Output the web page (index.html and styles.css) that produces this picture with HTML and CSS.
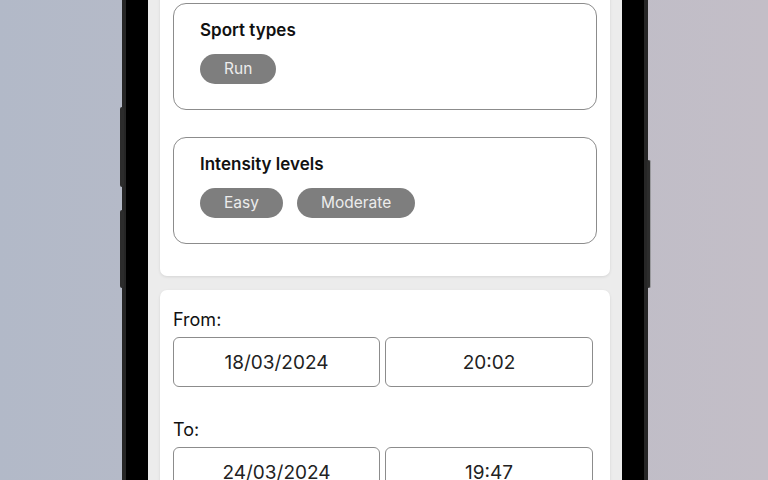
FILE: index.html
```html
<!DOCTYPE html>
<html lang="en">
<head>
<meta charset="utf-8">
<title>Filters</title>
<link rel="stylesheet" href="styles.css">
</head>
<body>
<div class="phone">
  <span class="btn btn-l1"></span>
  <span class="btn btn-l2"></span>
  <span class="btn btn-r1"></span>
  <div class="bezel">
    <div class="screen">
      <section class="card card-filters">
        <div class="group">
          <h2 class="group-title">Sport types</h2>
          <div class="chips">
            <span class="chip">Run</span>
          </div>
        </div>
        <div class="group">
          <h2 class="group-title">Intensity levels</h2>
          <div class="chips">
            <span class="chip">Easy</span>
            <span class="chip">Moderate</span>
          </div>
        </div>
      </section>
      <section class="card card-dates">
        <div class="field">
          <div class="label">From:</div>
          <div class="inputs">
            <div class="input">18/03/2024</div>
            <div class="input">20:02</div>
          </div>
        </div>
        <div class="field">
          <div class="label">To:</div>
          <div class="inputs">
            <div class="input">24/03/2024</div>
            <div class="input">19:47</div>
          </div>
        </div>
      </section>
    </div>
  </div>
</div>
</body>
</html>
```

FILE: styles.css
```css
* { box-sizing: border-box; }
html, body { margin: 0; padding: 0; }
body {
  width: 768px;
  height: 480px;
  overflow: hidden;
  background: linear-gradient(90deg, #b2b9c8 0%, #bbbcc8 50%, #c3bec7 100%);
  display: flex;
  justify-content: center;
  align-items: flex-start;
  padding-left: 2px;
  font-family: "Inter", "Roboto", "Liberation Sans", sans-serif;
}
.phone {
  position: relative;
  width: 526px;
  height: 680px;
  margin-top: -100px;
  flex: none;
  background: #262626;
  border-radius: 70px;
  padding: 4px;
}
.btn {
  position: absolute;
  width: 4px;
  background: #2c2c2c;
  border-radius: 2px;
}
.btn-l1 { left: -2px; top: 207px; height: 80px; }
.btn-l2 { left: -2px; top: 310px; height: 78px; }
.btn-r1 { right: -3px; top: 260px; height: 128px; border-right: 1px solid #9a9a9e; }
.bezel {
  height: 100%;
  background: #000;
  border-radius: 66px;
  padding: 22px;
}
.screen {
  height: 100%;
  background: #ececec;
  border-radius: 44px;
  overflow: hidden;
  padding: 52px 12px 0;
  display: flex;
  flex-direction: column;
  gap: 14px;
}
.card {
  background: #fff;
  border-radius: 7px;
  box-shadow: 0 1px 3px rgba(0, 0, 0, 0.10);
}
.card-filters {
  padding: 25px 13px 32px;
  display: flex;
  flex-direction: column;
  gap: 27px;
}
.group {
  border: 1px solid #8c8c8c;
  border-radius: 13px;
  padding: 15px 26px 25px;
}
.group-title {
  margin: 0 0 13px;
  font-size: 17px;
  line-height: 22px;
  font-weight: 600;
  color: #111;
}
.chips {
  display: flex;
  gap: 14px;
}
.chip {
  height: 30px;
  line-height: 30px;
  padding: 0 24px;
  border-radius: 15px;
  background: #7e7e7e;
  color: #ececec;
  font-size: 15.5px;
}
.card-dates {
  padding: 19px 13px 20px;
  display: flex;
  flex-direction: column;
  gap: 32px;
}
.label {
  font-size: 18px;
  line-height: 22px;
  color: #111;
  margin-bottom: 6px;
}
.inputs {
  display: grid;
  grid-template-columns: 207px 208px;
  gap: 5px;
}
.input {
  height: 50px;
  border: 1px solid #8c8c8c;
  border-radius: 6px;
  display: flex;
  align-items: center;
  justify-content: center;
  font-size: 19px;
  color: #222;
}
```
